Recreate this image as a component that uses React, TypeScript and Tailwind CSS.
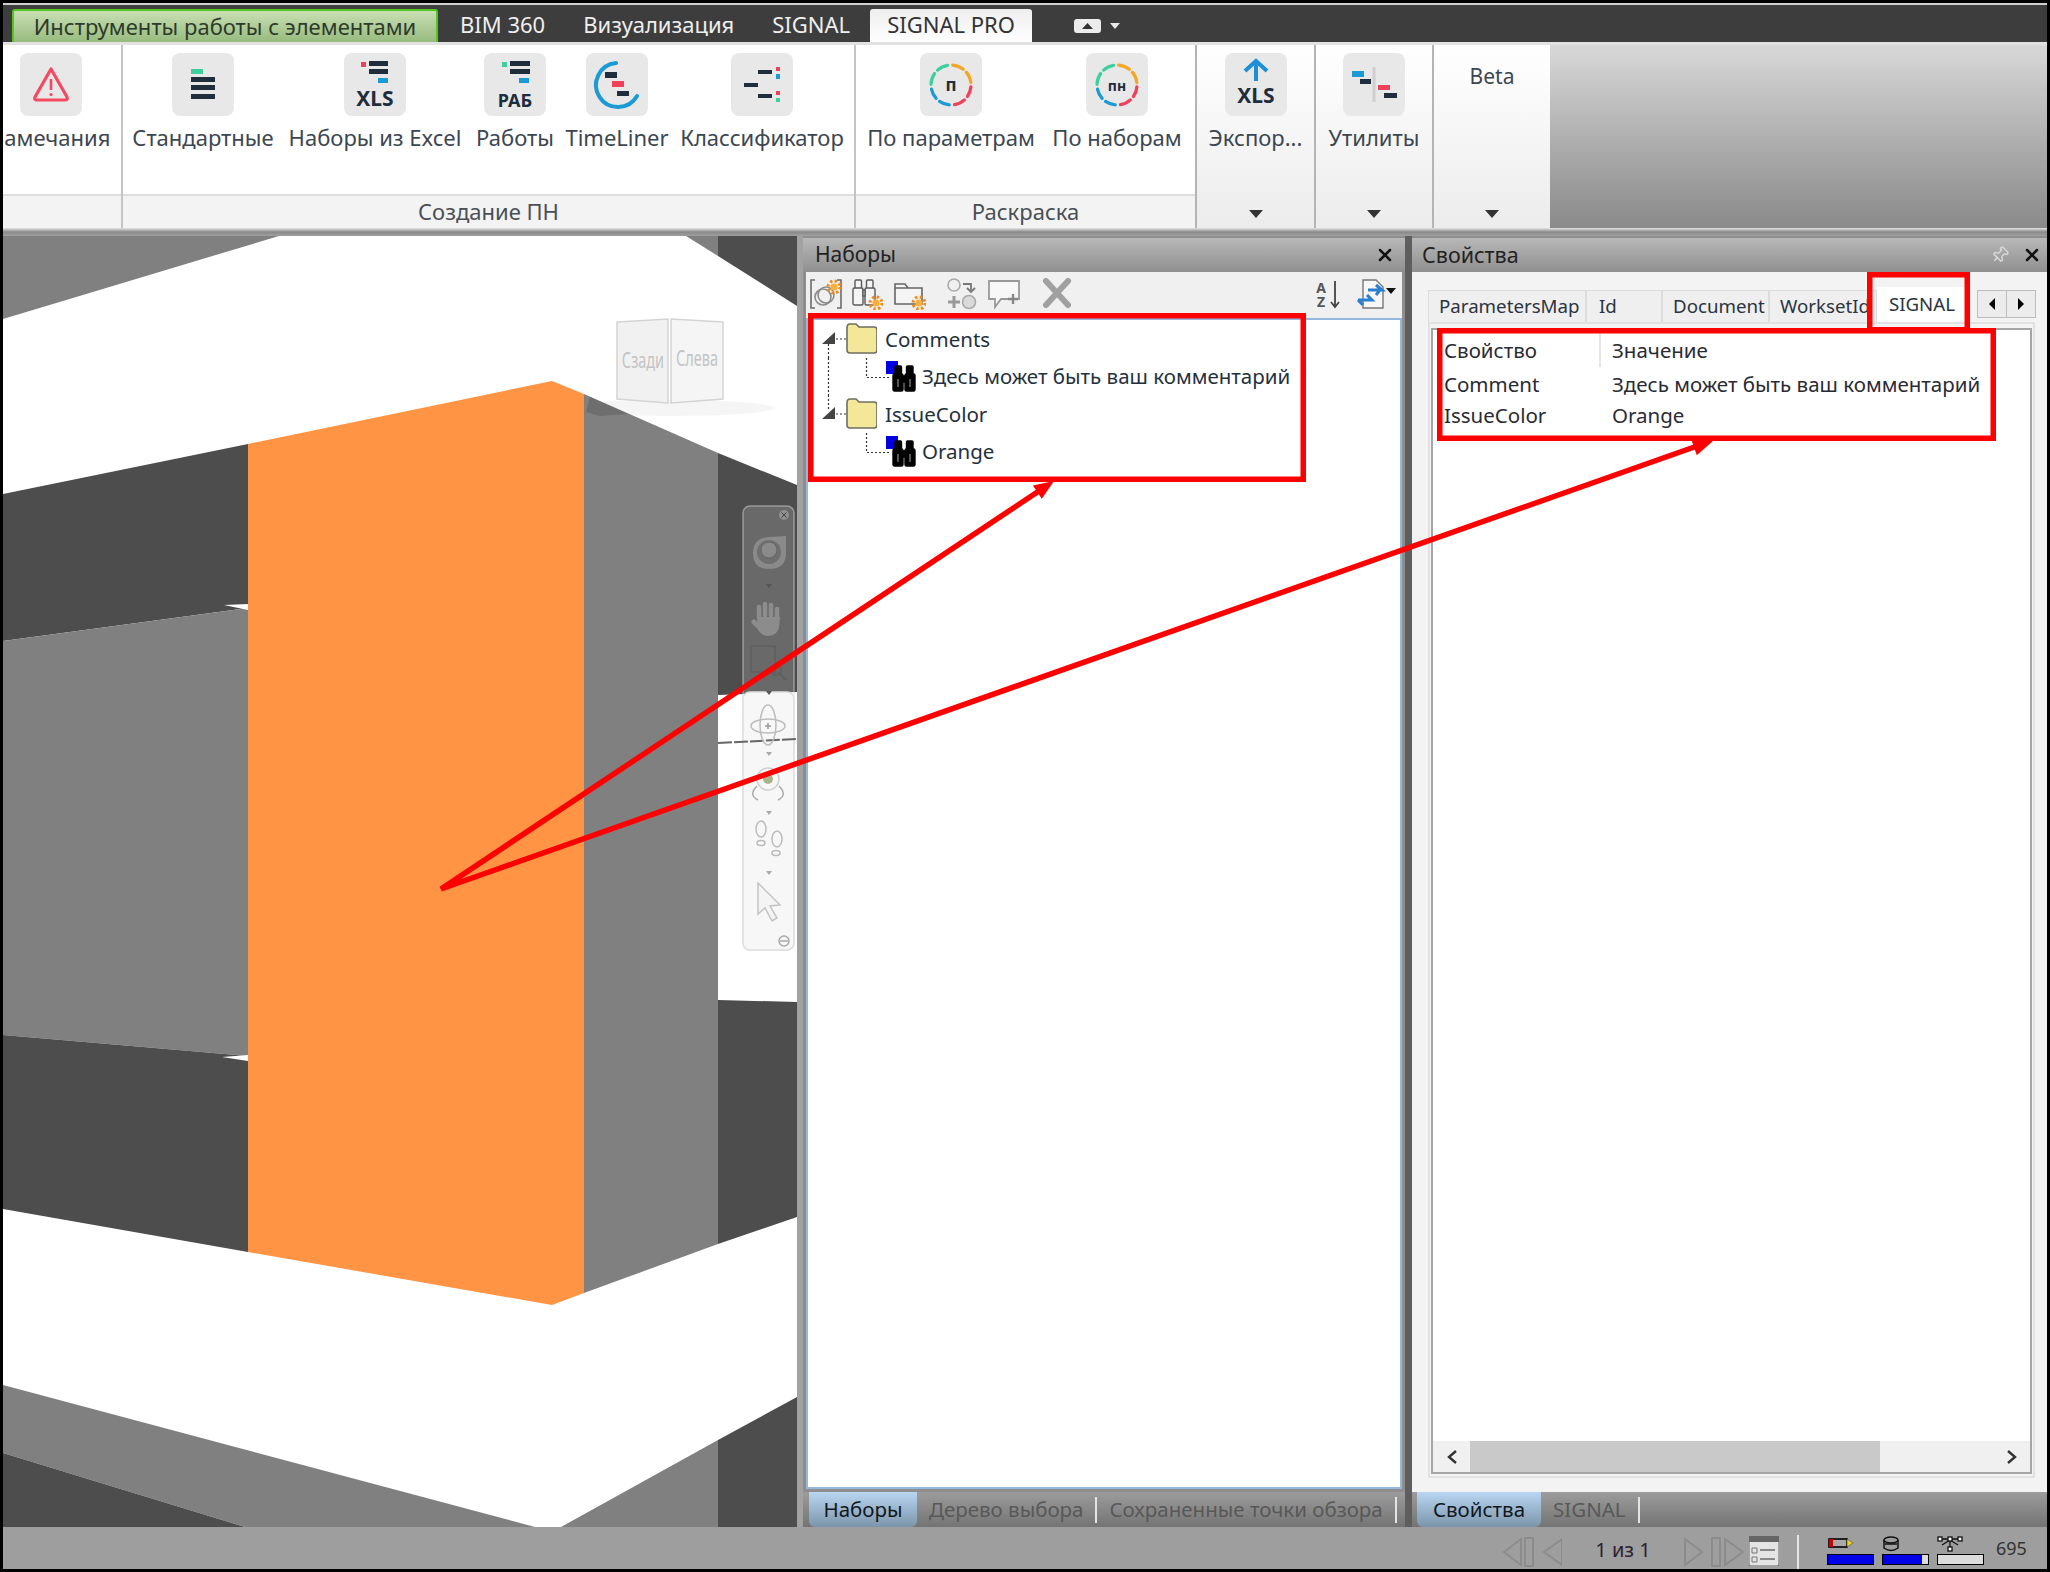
import React from 'react';
import { Pin, X } from 'lucide-react';

const NAVY = '#1f2d3d';
const RED = '#f0415a';
const BLUE = '#1c9ad6';
const GREEN = '#3ecf9e';
const ORANGE = '#f5a623';
const COMMENT = 'Здесь может быть ваш комментарий';

// angles are clockwise from twelve o'clock
const arc = (cx: number, cy: number, r: number, a0: number, a1: number) => {
  const p = (a: number) => {
    const t = ((a - 90) * Math.PI) / 180;
    return `${(cx + r * Math.cos(t)).toFixed(2)} ${(cy + r * Math.sin(t)).toFixed(2)}`;
  };
  return `M ${p(a0)} A ${r} ${r} 0 ${a1 - a0 > 180 ? 1 : 0} 1 ${p(a1)}`;
};

const RING: [number, number, string][] = [
  [5, 38, ORANGE],
  [50, 83, ORANGE],
  [95, 125, RED],
  [138, 170, RED],
  [185, 215, BLUE],
  [228, 258, BLUE],
  [272, 305, GREEN],
  [318, 350, GREEN],
];

const Tile = ({ children }: { children: React.ReactNode }) => (
  <div className="w-[62px] h-[63px] rounded-lg bg-[#e8e8e8] shrink-0">
    <svg width="62" height="63" viewBox="0 0 62 63">{children}</svg>
  </div>
);

const RingIcon = ({ label, size }: { label: string; size: number }) => (
  <Tile>
    {RING.map(([a, b, c]) => (
      <path key={a} d={arc(31, 32, 20, a, b)} fill="none" stroke={c} strokeWidth="3.2" strokeLinecap="round" />
    ))}
    <text x="31" y="38" textAnchor="middle" fontSize={size} fontWeight="700" fill={NAVY}>{label}</text>
  </Tile>
);

const Bar = ({ x, y, w, h = 5, c = NAVY }: { x: number; y: number; w: number; h?: number; c?: string }) => (
  <rect x={x} y={y} width={w} height={h} fill={c} />
);

const RibbonItem = ({ w, label, children }: { w: string; label: string; children: React.ReactNode }) => (
  <div className={`${w} shrink-0 flex flex-col items-center pt-[8px]`}>
    {children}
    <div className="mt-[9px] h-[24px] leading-[24px] text-[22px] text-[#3c4650] whitespace-nowrap">{label}</div>
  </div>
);

const GroupFooter = ({ label }: { label: string }) => (
  <div className="h-[34px] bg-[#f3f3f3] border-t-2 border-[#dedede] flex items-center justify-center pb-[2px] text-[22px] text-[#4a4f55]">
    {label}
  </div>
);

const Caret = () => <div className="w-0 h-0 border-x-[7px] border-x-transparent border-t-[8px] border-t-[#333] mx-auto" />;

const DropGroup = ({ w, children }: { w: string; children: React.ReactNode }) => (
  <div className={`${w} shrink-0 h-full border-l-2 border-[#b4b4b4] bg-gradient-to-b from-white to-[#ececec] flex flex-col`}>
    <div className="flex-1">{children}</div>
    <div className="h-[18px]"><Caret /></div>
  </div>
);

const Ribbon = () => (
  <div className="flex h-[186px] bg-gradient-to-b from-[#d8d8d8] to-[#8a8a8a] border-t-[3px] border-[#e2e2e2]">
    <div className="w-[120px] shrink-0 bg-white flex flex-col overflow-hidden border-r-2 border-[#c4c4c4]">
      <div className="flex-1 flex ml-[-11px]">
        <RibbonItem w="w-[118px]" label="Замечания">
          <Tile>
            <path d="M31 16 L47 44 Q48 47 45 47 L17 47 Q14 47 15 44 Z" fill="none" stroke="#f5495f" strokeWidth="3.2" strokeLinejoin="round" />
            <path d="M31 26 V37" stroke="#f5495f" strokeWidth="2.6" />
            <circle cx="31" cy="41.5" r="1.6" fill="#f5495f" />
          </Tile>
        </RibbonItem>
      </div>
      <GroupFooter label="" />
    </div>
    <div className="w-[733px] shrink-0 bg-white flex flex-col border-r-2 border-[#c4c4c4]">
      <div className="flex-1 flex pl-[7px]">
        <RibbonItem w="w-[146px]" label="Стандартные">
          <Tile>
            <Bar x={19} y={16} w={12} c={GREEN} />
            <Bar x={19} y={24} w={24} />
            <Bar x={19} y={32} w={24} />
            <Bar x={19} y={41} w={24} />
          </Tile>
        </RibbonItem>
        <RibbonItem w="w-[198px]" label="Наборы из Excel">
          <Tile>
            <Bar x={17} y={9} w={5} c={RED} />
            <Bar x={25} y={8} w={19} />
            <Bar x={25} y={16} w={19} />
            <Bar x={34} y={25} w={10} c={BLUE} />
            <text x="31" y="53" textAnchor="middle" fontSize="21" fontWeight="700" fill={NAVY}>XLS</text>
          </Tile>
        </RibbonItem>
        <RibbonItem w="w-[82px]" label="Работы">
          <Tile>
            <Bar x={18} y={9} w={5} c={GREEN} />
            <Bar x={26} y={8} w={20} />
            <Bar x={26} y={16} w={20} />
            <Bar x={35} y={25} w={10} c={BLUE} />
            <text x="31" y="54" textAnchor="middle" fontSize="18" fontWeight="700" fill={NAVY}>РАБ</text>
          </Tile>
        </RibbonItem>
        <RibbonItem w="w-[122px]" label="TimeLiner">
          <Tile>
            <path d={arc(32, 32, 22, 120, 355)} fill="none" stroke={BLUE} strokeWidth="4" strokeLinecap="round" />
            <Bar x={19} y={19} w={12} h={6} />
            <Bar x={26} y={28} w={12} h={6} c={RED} />
            <Bar x={31} y={38} w={12} h={5} />
          </Tile>
        </RibbonItem>
        <RibbonItem w="w-[168px]" label="Классификатор">
          <Tile>
            <Bar x={27} y={17} w={14} h={4} />
            <Bar x={13} y={30} w={14} h={4} />
            <Bar x={27} y={41} w={14} h={4} />
            <Bar x={45} y={14} w={4} h={4} c={RED} />
            <Bar x={45} y={21} w={4} h={5} c={BLUE} />
            <Bar x={45} y={38} w={4} h={4} c={RED} />
            <Bar x={45} y={45} w={4} h={4} c={GREEN} />
          </Tile>
        </RibbonItem>
      </div>
      <GroupFooter label="Создание ПН" />
    </div>
    <div className="w-[339px] shrink-0 bg-white flex flex-col">
      <div className="flex-1 flex pl-[4px]">
        <RibbonItem w="w-[182px]" label="По параметрам"><RingIcon label="п" size={17} /></RibbonItem>
        <RibbonItem w="w-[150px]" label="По наборам"><RingIcon label="пн" size={14} /></RibbonItem>
      </div>
      <GroupFooter label="Раскраска" />
    </div>
    <DropGroup w="w-[119px]">
      <RibbonItem w="w-full" label="Экспор...">
        <Tile>
          <path d="M31 9 V28 M20 18 L31 8 L42 18" fill="none" stroke="#1c8fd6" strokeWidth="4" />
          <text x="31" y="50" textAnchor="middle" fontSize="21" fontWeight="700" fill={NAVY}>XLS</text>
        </Tile>
      </RibbonItem>
    </DropGroup>
    <DropGroup w="w-[118px]">
      <RibbonItem w="w-full" label="Утилиты">
        <Tile>
          <path d="M31 14 V49" stroke="#cfcfcf" strokeWidth="3" />
          <Bar x={9} y={18} w={12} h={6} c={BLUE} />
          <Bar x={17} y={26} w={11} h={5} />
          <Bar x={35} y={32} w={12} h={5} c={RED} />
          <Bar x={41} y={40} w={13} h={5} />
        </Tile>
      </RibbonItem>
    </DropGroup>
    <DropGroup w="w-[118px]">
      <div className="h-[58px] flex items-center justify-center pt-[6px] text-[21px] text-[#3c4650]">Beta</div>
    </DropGroup>
  </div>
);

const TabBar = () => (
  <div className="h-[39px] bg-[#3d3d3d] border-t-2 border-[#cfcfcf] flex items-end pl-[9px] text-[22px] leading-[31px] whitespace-nowrap">
    <div className="w-[426px] h-[33px] rounded-t-[3px] border-2 border-b-0 border-[#55c41f] bg-gradient-to-b from-[#c9dfb4] to-[#97bb7e] text-[#2e3a2a] text-center">
      Инструменты работы с элементами
    </div>
    <div className="ml-[22px] h-[33px] text-[#efefef]">BIM 360</div>
    <div className="ml-[38px] h-[33px] text-[#efefef]">Визуализация</div>
    <div className="ml-[38px] h-[33px] text-[#efefef]">SIGNAL</div>
    <div className="ml-[20px] w-[162px] h-[33px] rounded-t-[3px] bg-gradient-to-b from-[#eeeeee] to-white text-[#333] text-center">
      SIGNAL PRO
    </div>
    <div className="ml-[42px] h-[33px] flex items-center gap-[9px]">
      <svg width="27" height="14" viewBox="0 0 27 14">
        <rect width="27" height="14" rx="3" fill="#ececec" />
        <path d="M8 10 L13.5 4 L19 10 Z" fill="#333" />
      </svg>
      <div className="w-0 h-0 border-x-[5px] border-x-transparent border-t-[6px] border-t-[#e8e8e8]" />
    </div>
  </div>
);

// the 3D model in the viewport, drawn in page coordinates
const Viewport = () => (
  <div className="w-[794px] shrink-0 h-full bg-white">
    <svg width="794" height="1291" viewBox="3 236 794 1291">
      <rect x="3" y="236" width="794" height="1291" fill="#fff" />
      <polygon points="3,236 279,236 3,319" fill="#808080" />
      <polygon points="686,236 718,236 718,256" fill="#808080" />
      <polygon points="718,236 797,236 797,306 718,256" fill="#4d4d4d" />
      <polygon points="3,494 248,444 248,608 3,641" fill="#4d4d4d" />
      <polygon points="3,641 248,608 248,1056 3,1035" fill="#808080" />
      <polygon points="3,1035 248,1056 248,1252 3,1209" fill="#4d4d4d" />
      <polygon points="224,605 248,604 248,610" fill="#fff" />
      <polygon points="222,1057 248,1055 248,1061" fill="#fff" />
      <ellipse cx="670" cy="408" rx="104" ry="8" fill="#000" opacity="0.04" />
      <polygon points="248,444 552,381 584,394 584,1293 552,1305 248,1252" fill="#ff9444" />
      <polygon points="584,394 718,453 718,1244 584,1293" fill="#808080" />
      <polygon points="718,453 797,485 797,692 718,695" fill="#4d4d4d" />
      <polygon points="718,1000 797,1002 797,1217 718,1244" fill="#4d4d4d" />
      <polygon points="3,1385 535,1527 245,1527 3,1453" fill="#808080" />
      <polygon points="3,1453 245,1527 3,1527" fill="#4d4d4d" />
      <polygon points="561,1527 718,1440 718,1527" fill="#808080" />
      <polygon points="718,1440 797,1397 797,1527 718,1527" fill="#4d4d4d" />
      <polygon points="590,397 628,414 600,416 586,412" fill="#6e6e6e" />

      {/* view cube */}
      <polygon points="617,322 668,319 668,403 617,399" fill="#f1f1f1" stroke="#d4d4d4" strokeWidth="1.5" />
      <polygon points="671,319 723,322 723,399 671,403" fill="#f5f5f5" stroke="#d4d4d4" strokeWidth="1.5" />
      <text x="643" y="368" textAnchor="middle" fontSize="22" fill="#c4c4c4" transform="translate(643 0) scale(0.66 1) translate(-643 0)">Сзади</text>
      <text x="697" y="366" textAnchor="middle" fontSize="22" fill="#c4c4c4" transform="translate(697 0) scale(0.66 1) translate(-697 0)">Слева</text>

      {/* navigation bar */}
      <rect x="743" y="506" width="51" height="444" rx="7" fill="#fff" fillOpacity="0.16" stroke="#d8d8d8" strokeOpacity="0.5" strokeWidth="1.5" />
      <rect x="743" y="692" width="51" height="258" rx="7" fill="#f7f7f7" stroke="#dedede" strokeWidth="1.5" />
      <line x1="718" y1="743" x2="797" y2="739" stroke="#666" strokeWidth="2" strokeDasharray="14 2" />
      <circle cx="784" cy="515" r="5" fill="#8f8f8f" />
      <path d="M781.5 512.5 L786.5 517.5 M786.5 512.5 L781.5 517.5" stroke="#444" strokeWidth="1" />
      <path d="M753 553 Q753 538 769 537 L786 536 L786 553 Q786 569 769 569 Q753 569 753 553 Z" fill="#8a8a8a" />
      <circle cx="769" cy="552" r="12" fill="#6f6f6f" />
      <circle cx="769" cy="550" r="8" fill="#8a8a8a" stroke="#666" strokeWidth="1" />
      <path d="M766 584 h6 l-3 4 Z M766 691 h6 l-3 4 Z" fill="#555" />
      <g stroke="#8c8c8c" strokeLinecap="round" fill="none">
        <path d="M759 618 V607 M765 616 V604 M771 616 V605 M777 619 V609" strokeWidth="4.5" />
        <path d="M754 622 L762 630" strokeWidth="5" />
      </g>
      <path d="M757 617 H780 L779 628 Q776 636 768 636 Q762 636 758 630 Z" fill="#8c8c8c" />
      <rect x="751" y="646" width="24" height="26" fill="none" stroke="#5f5f5f" strokeWidth="1.5" />
      <circle cx="776" cy="670" r="5" fill="none" stroke="#5f5f5f" strokeWidth="2" />
      <path d="M780 674 L786 680" stroke="#5f5f5f" strokeWidth="2" />
      <ellipse cx="768" cy="725" rx="8" ry="20" fill="none" stroke="#bdbdbd" strokeWidth="1.5" />
      <ellipse cx="768" cy="726" rx="17" ry="7" fill="none" stroke="#bdbdbd" strokeWidth="1.5" />
      <path d="M765 726 h6 M768 723 v6" stroke="#999" strokeWidth="1.5" />
      <path d="M766 752 h6 l-3 4 Z M766 811 h6 l-3 4 Z M766 871 h6 l-3 4 Z" fill="#aaa" />
      <circle cx="768" cy="779" r="11" fill="none" stroke="#cfcfcf" strokeWidth="1.5" />
      <circle cx="768" cy="779" r="5" fill="#a8b48c" />
      <path d="M757 786 Q748 795 758 800 M779 786 Q788 795 778 800" fill="none" stroke="#aaa" strokeWidth="1.5" />
      <ellipse cx="761" cy="829" rx="5" ry="8" fill="none" stroke="#bbb" strokeWidth="1.5" />
      <ellipse cx="761" cy="843" rx="4" ry="2.5" fill="none" stroke="#bbb" strokeWidth="1.5" />
      <ellipse cx="777" cy="839" rx="5" ry="8" fill="none" stroke="#bbb" strokeWidth="1.5" />
      <ellipse cx="776" cy="853" rx="4" ry="2.5" fill="none" stroke="#bbb" strokeWidth="1.5" />
      <path d="M758 883 L780 905 L770 906 L777 918 L772 921 L765 908 L758 914 Z" fill="#f4f4f4" stroke="#c4c4c4" strokeWidth="1.5" />
      <circle cx="784" cy="941" r="5" fill="none" stroke="#aaa" strokeWidth="1.5" />
      <path d="M780 941 h8" stroke="#aaa" strokeWidth="1.5" />
    </svg>
  </div>
);

const Sun = ({ cx, cy }: { cx: number; cy: number }) => (
  <>
    <circle cx={cx} cy={cy} r="6" fill="none" stroke="#f08a1c" strokeWidth="3" strokeDasharray="2.4 2.3" />
    <circle cx={cx} cy={cy} r="3.6" fill="#f7b13a" />
  </>
);

const ToolIcon = ({ w = 32, children }: { w?: number; children: React.ReactNode }) => (
  <svg width={w} height="32" viewBox={`0 0 ${w} 32`} className="shrink-0">{children}</svg>
);

// two barrels joined by a bridge, 24 wide and 27 tall
const Binoculars = ({ x, y, fill, stroke, band }: { x: number; y: number; fill: string; stroke: string; band?: string }) => (
  <g transform={`translate(${x} ${y})`} fill={fill} stroke={stroke} strokeWidth="1.4">
    <rect x="3" y="1" width="6.5" height="9" rx="1" />
    <rect x="14.5" y="1" width="6.5" height="9" rx="1" />
    <rect x="1" y="9" width="10" height="17" rx="1.5" />
    <rect x="13" y="9" width="10" height="17" rx="1.5" />
    <rect x="11" y="11" width="2" height="6" />
    {band && <path d="M6 14 V22 M18 14 V22" stroke={band} strokeWidth="2" />}
  </g>
);

const SetsToolbar = () => (
  <div className="h-[46px] bg-[#f0f0f0] flex items-start pt-[6px] pl-[4px] pr-[6px]">
    <ToolIcon>
      <path d="M5 2 H1 V30 H5 M27 2 H31 V30 H27" fill="none" stroke="#6b6b6b" strokeWidth="1.6" />
      <circle cx="13" cy="19" r="8" fill="none" stroke="#8c8c8c" strokeWidth="1.6" />
      <circle cx="16" cy="17" r="8" fill="none" stroke="#8c8c8c" strokeWidth="1.6" />
      <Sun cx={24} cy={9} />
    </ToolIcon>
    <div className="ml-[9px]">
      <ToolIcon>
        <Binoculars x={1} y={1} fill="#f4f4f4" stroke="#5a5a5a" />
        <Sun cx={25} cy={25} />
      </ToolIcon>
    </div>
    <div className="ml-[11px]">
      <ToolIcon>
        <path d="M1 6 H11 L14 10 H28 V26 H1 Z M1 10 H14" fill="#f4f4f4" stroke="#666" strokeWidth="1.6" />
        <Sun cx={25} cy={25} />
      </ToolIcon>
    </div>
    <div className="ml-[19px]">
      <ToolIcon>
        <circle cx="9" cy="7" r="6" fill="none" stroke="#aaa" strokeWidth="1.6" />
        <path d="M18 6 H26 V12 M22 10 L26 14 L30 10" fill="none" stroke="#777" strokeWidth="1.8" />
        <path d="M3 24 H15 M9 18 V30" stroke="#999" strokeWidth="3" />
        <circle cx="24" cy="24" r="6.5" fill="#dadada" stroke="#aaa" strokeWidth="1.6" />
      </ToolIcon>
    </div>
    <div className="ml-[11px]">
      <ToolIcon>
        <path d="M1 3 H31 V21 H13 L7 29 V21 H1 Z" fill="#f8f8f8" stroke="#999" strokeWidth="1.8" />
        <path d="M20 21 H30 M25 16 V26" stroke="#888" strokeWidth="2.4" />
      </ToolIcon>
    </div>
    <div className="ml-[22px]">
      <ToolIcon>
        <path d="M4 3 L26 27 M26 3 L4 27" stroke="#a0a0a0" strokeWidth="6" strokeLinecap="round" />
      </ToolIcon>
    </div>
    <div className="ml-auto flex items-start">
      <ToolIcon w={28}>
        <text x="7" y="15" textAnchor="middle" fontSize="14" fontWeight="700" fill="#555">A</text>
        <text x="7" y="29" textAnchor="middle" fontSize="14" fontWeight="700" fill="#555">Z</text>
        <path d="M21 3 V28 M17 24 L21 29 L25 24" fill="none" stroke="#444" strokeWidth="1.8" />
      </ToolIcon>
      <div className="ml-[14px]">
        <ToolIcon w={40}>
          <path d="M7 2 H20 L27 9 V30 H7 Z" fill="#f7f7f7" stroke="#777" strokeWidth="1.4" />
          <path d="M12 12 H26 L20 7 M24 12 L20 17 M2 22 H16 L11 17 M2 22 L7 27" fill="none" stroke="#2a7fd0" strokeWidth="3" />
          <path d="M30 10 H40 L35 16 Z" fill="#111" />
        </ToolIcon>
      </div>
    </div>
  </div>
);

const Dotted = '#333';

const GroupRow = ({ label, last }: { label: string; last?: boolean }) => (
  <div className="h-[38px] flex items-center">
    <svg width="55" height="38" viewBox="0 0 55 38" className="shrink-0">
      <path d="M0 24 L13 12 V24 Z" fill="#444" />
      <path d="M14 19 H25" stroke={Dotted} strokeWidth="1.2" strokeDasharray="2 2" />
      {!last && <path d="M6.5 24 V38" stroke={Dotted} strokeWidth="1.2" strokeDasharray="2 2" />}
      {last && <path d="M6.5 0 V14" stroke={Dotted} strokeWidth="1.2" strokeDasharray="2 2" />}
      <path d="M25 8 Q25 4 28 4 H34 L37 7 H52 Q55 7 55 10 V30 Q55 33 52 33 H28 Q25 33 25 30 Z" fill="#f3e89a" stroke="#6e6e5e" strokeWidth="1.6" />
    </svg>
    <div className="ml-[8px] text-[20.5px] text-[#24303c] whitespace-nowrap">{label}</div>
  </div>
);

const SetRow = ({ label, cont }: { label: string; cont?: boolean }) => (
  <div className="h-[37px] flex items-center">
    <svg width="97" height="37" viewBox="0 0 97 37" className="shrink-0">
      {cont && <path d="M6.5 0 V37" stroke={Dotted} strokeWidth="1.2" strokeDasharray="2 2" />}
      <path d="M44.5 0 V19.5 H68" fill="none" stroke={Dotted} strokeWidth="1.2" strokeDasharray="2 2" />
      <rect x="64" y="3" width="12" height="13" fill="#0000e0" />
      <Binoculars x={70} y={7} fill="#000" stroke="#000" band="#555" />
    </svg>
    <div className="ml-[3px] text-[20.5px] text-[#24303c] whitespace-nowrap">{label}</div>
  </div>
);

const BottomTab = ({ w, label }: { w: string; label: string }) => (
  <div className={`${w} h-[35px] rounded-b-md bg-gradient-to-b from-[#b9d6f2] to-[#7c95aa] text-[#101820] flex items-center justify-center`}>{label}</div>
);

const DockStrip = ({ active, w, rest, pl }: { active: string; w: string; rest: string[]; pl: string }) => (
  <div className={`h-[35px] shrink-0 bg-gradient-to-b from-[#9c9c9c] to-[#747474] flex items-center ${pl} text-[20.5px] whitespace-nowrap`}>
    <BottomTab w={w} label={active} />
    {rest.map((t) => (
      <div key={t} className="flex items-center">
        <div className="pl-[12px] pr-[12px] text-[#585858]">{t}</div>
        <div className="w-[2px] h-[26px] bg-[#e4e4e4]" />
      </div>
    ))}
  </div>
);

const SetsPanel = () => (
  <div className="w-[602px] shrink-0 h-full pt-[2px] flex flex-col bg-[#8e8e8e]">
    <div className="h-[34px] shrink-0 bg-gradient-to-b from-[#b8b8b8] to-[#909090] flex items-center justify-between pl-[12px] pr-[10px] text-[21px] text-[#222]">
      <span>Наборы</span>
      <X size={20} strokeWidth={3} color="#111" />
    </div>
    <div className="mx-[3px] flex-1 flex flex-col">
      <SetsToolbar />
      <div className="flex-1 bg-white border-2 border-[#93b8dc] pl-[14px]">
        <GroupRow label="Comments" />
        <SetRow label={COMMENT} cont />
        <GroupRow label="IssueColor" last />
        <SetRow label="Orange" />
      </div>
    </div>
    <div className="h-[3px] shrink-0" />
    <DockStrip active="Наборы" w="w-[108px]" rest={['Дерево выбора', 'Сохраненные точки обзора']} pl="pl-[6px]" />
  </div>
);

const PropTab = ({ w, label, pl = 'pl-[10px]' }: { w: string; label: string; pl?: string }) => (
  <div className={`${w} ${pl} h-[32px] shrink-0 overflow-hidden border border-[#dcdcdc] border-b-0 bg-[#efefef] text-[18.7px] leading-[30px] text-[#2b3440] whitespace-nowrap`}>
    {label}
  </div>
);

const PropRow = ({ h, name, value, head }: { h: string; name: string; value: string; head?: boolean }) => (
  <div className={`${h} flex items-center text-[20.5px] text-[#2a2a33] whitespace-nowrap`}>
    <div className={`w-[168px] pl-[11px] ${head ? 'h-[34px] leading-[34px] border-r-2 border-[#e6e6e6]' : ''}`}>{name}</div>
    <div className="pl-[11px]">{value}</div>
  </div>
);

const PropsPanel = () => (
  <div className="flex-1 h-full pt-[2px] flex flex-col bg-[#8e8e8e]">
    <div className="h-[34px] shrink-0 bg-gradient-to-b from-[#b8b8b8] to-[#909090] flex items-center justify-between pl-[10px] pr-[5px] text-[21.5px] text-[#222]">
      <span>Свойства</span>
      <div className="flex items-center gap-[13px]">
        <Pin size={18} color="#d8d8d8" className="rotate-45" />
        <X size={20} strokeWidth={3} color="#111" />
      </div>
    </div>
    <div className="flex-1 bg-[#f3f3f3] flex flex-col pl-[16px]">
      <div className="h-[35px] mt-[15px] shrink-0 flex items-end">
        <PropTab w="w-[158px]" label="ParametersMap" />
        <PropTab w="w-[76px]" label="Id" pl="pl-[12px]" />
        <PropTab w="w-[107px]" label="Document" />
        <PropTab w="w-[108px]" label="WorksetId" />
        <div className="w-[90px] h-[35px] shrink-0 bg-white text-center text-[18.7px] leading-[34px] text-[#2b3440]">SIGNAL</div>
        <div className="ml-[10px] mb-[4px] self-end flex h-[28px] border border-[#bdbdbd] bg-[#ececec]">
          <div className="w-[29px] flex items-center justify-center border-r border-[#bdbdbd]">
            <div className="w-0 h-0 border-y-[6px] border-y-transparent border-r-[6px] border-r-black" />
          </div>
          <div className="w-[28px] flex items-center justify-center">
            <div className="w-0 h-0 border-y-[6px] border-y-transparent border-l-[6px] border-l-black" />
          </div>
        </div>
      </div>
      <div className="w-[607px] h-[1156px] shrink-0 border-2 border-[#e2e2e2] px-[1px] pt-[4px]">
        <div className="w-[601px] h-[1146px] bg-white border-2 border-[#a6a6a6] flex flex-col">
          <PropRow h="h-[40px]" name="Свойство" value="Значение" head />
          <PropRow h="h-[29px]" name="Comment" value={COMMENT} />
          <PropRow h="h-[32px]" name="IssueColor" value="Orange" />
          <div className="mt-auto h-[31px] bg-[#f0f0f0] flex items-center">
            <div className="w-[37px] flex justify-center">
              <svg width="12" height="16" viewBox="0 0 12 16"><path d="M10 2 L3 8 L10 14" fill="none" stroke="#333" strokeWidth="2.4" /></svg>
            </div>
            <div className="w-[410px] h-full bg-[#c9c9c9]" />
            <div className="flex-1 flex justify-end pr-[12px]">
              <svg width="12" height="16" viewBox="0 0 12 16"><path d="M2 2 L9 8 L2 14" fill="none" stroke="#333" strokeWidth="2.4" /></svg>
            </div>
          </div>
        </div>
      </div>
    </div>
    <DockStrip active="Свойства" w="w-[124px]" rest={['SIGNAL']} pl="pl-[5px]" />
  </div>
);

const Meter = ({ icon, fill }: { icon: React.ReactNode; fill: string }) => (
  <div className="w-[47px] flex flex-col gap-[2px]">
    <div className="h-[16px]">{icon}</div>
    <div className="h-[11px] border border-black bg-[#dcdcdc]">
      <div className={`${fill} h-full bg-[#0000e6]`} />
    </div>
  </div>
);

const StatusBar = () => (
  <div className="h-[42px] bg-[#9e9e9e] flex pl-[1499px] text-[#2c2030] whitespace-nowrap">
    <svg width="60" height="32" viewBox="0 0 60 32" className="mt-[9px] shrink-0" fill="none" stroke="#8c8c8c" strokeWidth="2">
      <path d="M19 3 L2 16 L19 29 Z M23 2 H31 V30 H23 Z M60 3 L42 16 L60 29 Z" />
    </svg>
    <div className="ml-[33px] w-[56px] text-[20px] leading-[42px] text-center pt-[2px]">1 из 1</div>
    <svg width="60" height="32" viewBox="0 0 60 32" className="ml-[33px] mt-[9px] shrink-0" fill="none" stroke="#8c8c8c" strokeWidth="2">
      <path d="M1 3 L18 16 L1 29 Z M28 2 H36 V30 H28 Z M41 3 L59 16 L41 29 Z" />
    </svg>
    <svg width="30" height="30" viewBox="0 0 30 30" className="ml-[5px] mt-[9px] shrink-0">
      <rect width="30" height="30" rx="2" fill="#e4e4e4" stroke="#666" />
      <rect width="30" height="6" fill="#666" />
      <path d="M3 12 h5 v5 h-5 z M3 21 h5 v5 h-5 z" fill="none" stroke="#777" />
      <path d="M11 14 H26 M11 23 H26" stroke="#888" strokeWidth="2" />
    </svg>
    <div className="ml-[18px] w-[2px] mt-[8px] bg-[#e6e6e6] shrink-0" />
    <div className="ml-[28px] flex gap-[8px] pt-[9px] shrink-0">
      <Meter
        fill="w-full"
        icon={
          <svg width="26" height="14" viewBox="0 0 26 14">
            <rect x="2" y="3" width="18" height="8" fill="#aaa" stroke="#000" strokeWidth="1.6" />
            <rect x="2" y="3" width="4" height="8" fill="#c00" />
            <path d="M20 3 L26 7 L20 11 Z" fill="#ecd21c" stroke="#555" strokeWidth="0.6" />
          </svg>
        }
      />
      <Meter
        fill="w-[86%]"
        icon={
          <svg width="18" height="16" viewBox="0 0 18 16" fill="none" stroke="#111" strokeWidth="1.5">
            <ellipse cx="9" cy="4" rx="7" ry="3" />
            <path d="M2 4 V12 Q9 17 16 12 V4 M3 8 H15" />
          </svg>
        }
      />
      <Meter
        fill="w-0"
        icon={
          <svg width="26" height="16" viewBox="0 0 26 16" fill="none" stroke="#111" strokeWidth="1.3">
            <path d="M13 4 L5 9 M13 4 V13 M13 4 L21 9 M4 3 H22" />
            <rect x="1" y="1" width="4" height="4" fill="#fff" />
            <rect x="11" y="1" width="4" height="4" fill="#fff" />
            <rect x="21" y="1" width="4" height="4" fill="#fff" />
            <rect x="11" y="11" width="4" height="4" fill="#fff" />
          </svg>
        }
      />
    </div>
    <div className="ml-[12px] text-[18px] text-[#333] pt-[8px]">695</div>
  </div>
);

const arrowHead = (x0: number, y0: number, x1: number, y1: number) => {
  const len = Math.hypot(x1 - x0, y1 - y0);
  const ux = (x1 - x0) / len;
  const uy = (y1 - y0) / len;
  const bx = x1 - ux * 20;
  const by = y1 - uy * 20;
  return `${x1},${y1} ${bx - uy * 8},${by + ux * 8} ${bx + uy * 8},${by - ux * 8}`;
};

// red callouts laid over the screenshot
const Annotations = () => (
  <svg className="absolute inset-0 pointer-events-none" width="2050" height="1572" viewBox="0 0 2050 1572">
    <g fill="none" stroke="#ff0000" strokeWidth="5.5">
      <rect x="810.75" y="315.75" width="492.5" height="163.5" />
      <rect x="1869.75" y="274.75" width="97.5" height="55" />
      <rect x="1439.75" y="330.75" width="553.5" height="107.5" />
      <path d="M1045 487 L441 889 L1700 445" strokeLinejoin="miter" />
    </g>
    <polygon points={arrowHead(441, 889, 1054, 481)} fill="#ff0000" />
    <polygon points={arrowHead(441, 889, 1713, 441)} fill="#ff0000" />
  </svg>
);

export default function App() {
  return (
    <div className="relative w-[2050px] h-[1572px] bg-black p-[3px] overflow-hidden font-['Noto_Sans',sans-serif]">
      <TabBar />
      <Ribbon />
      <div className="h-[8px] bg-gradient-to-b from-[#e6e6e6] via-[#8a8a8a] to-[#a0a0a0]" />
      <div className="flex h-[1291px] bg-[#5e5e5e]">
        <Viewport />
        <div className="w-[6px] shrink-0 bg-[#a2a2a2]" />
        <SetsPanel />
        <div className="w-[7px] shrink-0" />
        <PropsPanel />
      </div>
      <StatusBar />
      <Annotations />
    </div>
  );
}
